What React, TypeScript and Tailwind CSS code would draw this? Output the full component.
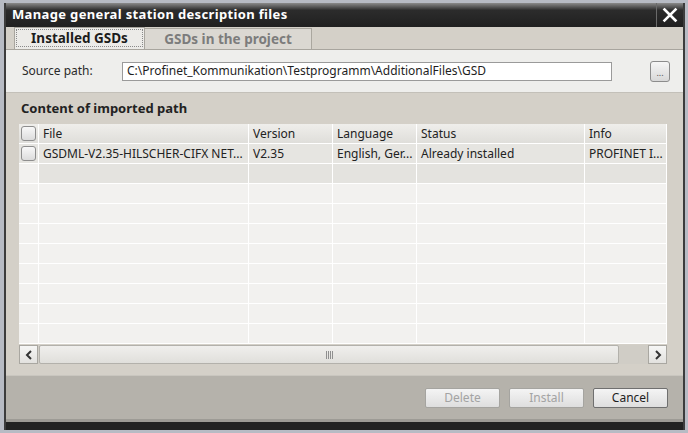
import React from 'react';

const font = { fontFamily: '"Noto Sans", "DejaVu Sans", sans-serif' };

type Col = { key: string; label: string; width: string };

const columns: Col[] = [
  { key: 'file', label: 'File', width: 'w-[210px]' },
  { key: 'version', label: 'Version', width: 'w-[84px]' },
  { key: 'language', label: 'Language', width: 'w-[84px]' },
  { key: 'status', label: 'Status', width: 'w-[168px]' },
  { key: 'info', label: 'Info', width: 'w-[82px]' },
];

const rows: Record<string, string>[] = [
  {
    file: 'GSDML-V2.35-HILSCHER-CIFX NET...',
    version: 'V2.35',
    language: 'English, Ger...',
    status: 'Already installed',
    info: 'PROFINET I...',
  },
];

function CheckBox() {
  return (
    <div className="w-[15px] h-[15px] rounded-[3px] border border-[#8e8e8e] bg-[linear-gradient(to_bottom,#f8f8f8,#dcdcdc)]" />
  );
}

function DialogButton({ label, disabled }: { label: string; disabled?: boolean }) {
  return (
    <button
      className={`w-[75px] h-[20px] border rounded-[2px] text-[12px] leading-none bg-[linear-gradient(to_bottom,#f4f4f4,#dedede)] ${
        disabled ? 'border-[#a5a4a0] text-[#a3a3a3]' : 'border-[#6f6f6f] text-[#1e1e1e]'
      }`}
    >
      {label}
    </button>
  );
}

export default function App() {
  const emptyRows = 9;

  return (
    <div className="w-[688px] h-[433px] bg-[#b7bbc4] pt-[3px] pl-[4px] pr-[3px] pb-[3px] overflow-hidden" style={font}>
      <div className="h-full flex flex-col border-x-2 border-[#3c3c3c] bg-[#d4d0c8]">
        {/* title bar */}
        <div className="h-[24px] flex items-stretch bg-[linear-gradient(to_bottom,#8a8a8a_0%,#2c2c2c_30%,#202020_100%)]">
          <div className="flex-1 pl-[6px] flex items-center text-white font-bold text-[13px] tracking-[0.35px]">
            Manage general station description files
          </div>
          <div className="w-[27px] border-l border-[#6a6a6a] flex items-center justify-center">
            <svg width="16" height="16" viewBox="0 0 16 16">
              <path d="M2.5 2.5 L13.5 13.5 M13.5 2.5 L2.5 13.5" stroke="#ffffff" strokeWidth="2.6" strokeLinecap="square" />
            </svg>
          </div>
        </div>

        {/* tabs */}
        <div className="h-[23px] flex items-end pl-[8px] bg-[#d4d0c8] border-b border-[#a8a59e]">
          <div className="w-[131px] h-[22px] flex items-center justify-center bg-[#ecebe8] border border-[#a8a59e] border-b-0 outline-1 outline-dotted outline-[#8a8a8a] -outline-offset-3 text-[13.5px] font-bold text-[#1c1c1c]">
            Installed GSDs
          </div>
          <div className="w-[167px] h-[21px] flex items-center justify-center bg-[#dbd8d2] border border-[#aaa79f] border-b-0 border-l-0 text-[13.5px] font-bold text-[#7c7c7c]">
            GSDs in the project
          </div>
        </div>

        {/* source path */}
        <div className="h-[43px] bg-[#eeeeec] flex items-center pl-[16px] pr-[13px] border-b border-[#c3c0b9]">
          <span className="w-[100px] text-[12px] text-[#2a2a2a]">Source path:</span>
          <div className="w-[490px] h-[19px] bg-white border border-[#9a9a9a] flex items-center pl-[4px] text-[12px] text-[#1e1e1e] whitespace-nowrap overflow-hidden">
            C:\Profinet_Kommunikation\Testprogramm\AdditionalFiles\GSD
          </div>
          <div className="flex-1" />
          <button className="w-[20px] h-[21px] rounded-[3px] border border-[#8c8c8c] bg-[linear-gradient(to_bottom,#f6f6f6,#d8d8d8)] flex items-end justify-center pb-[4px]">
            <span className="text-[9px] leading-none text-[#555]">...</span>
          </button>
        </div>

        {/* content section */}
        <div className="h-[282px] bg-[#d4d0c8] px-[13px] flex flex-col">
          <div className="h-[31px] flex items-center pl-[2px] text-[13px] font-bold text-[#222]">Content of imported path</div>

          <div className="w-[648px] flex flex-col">
            {/* header */}
            <div className="flex h-[20px] bg-[linear-gradient(to_bottom,#efeeeb,#dfdeda)] border-b border-white">
              <div className="w-[20px] flex items-center justify-center border-r border-white">
                <CheckBox />
              </div>
              {columns.map((c) => (
                <div key={c.key} className={`${c.width} flex items-center pl-[4px] border-r border-white text-[12px] text-[#222]`}>
                  {c.label}
                </div>
              ))}
            </div>

            {/* data rows */}
            {rows.map((r, i) => (
              <div key={i} className="flex h-[20px] bg-[#e6e5e1] border-b border-white">
                <div className="w-[20px] flex items-center justify-center border-r border-white">
                  <CheckBox />
                </div>
                {columns.map((c) => (
                  <div
                    key={c.key}
                    className={`${c.width} flex items-center pl-[4px] border-r border-white text-[12px] text-[#222] whitespace-nowrap overflow-hidden`}
                  >
                    {r[c.key]}
                  </div>
                ))}
              </div>
            ))}

            {Array.from({ length: emptyRows }).map((_, i) => (
              <div key={i} className="flex h-[20px] border-b border-white">
                <div className="w-[20px] bg-[#f2f1ef] border-r border-white" />
                {columns.map((c) => (
                  <div key={c.key} className={`${c.width} border-r border-white ${i === 0 ? 'bg-[#e4e3df]' : 'bg-[#f2f1ef]'}`} />
                ))}
              </div>
            ))}

            {/* horizontal scrollbar */}
            <div className="flex h-[19px] mt-[1px] bg-[#d0cdc6]">
              <div className="w-[19px] h-[19px] border border-[#a9a7a1] bg-[linear-gradient(to_bottom,#f6f6f5,#e2e1de)] flex items-center justify-center">
                <svg width="8" height="10" viewBox="0 0 8 10">
                  <path d="M6 1 L2 5 L6 9" stroke="#333" strokeWidth="2" fill="none" />
                </svg>
              </div>
              <div className="w-[580px] ml-[1px] h-[19px] rounded-[2px] border border-[#b3b1ab] bg-[linear-gradient(to_bottom,#f0efed,#e0dfdb)] flex items-center justify-center">
                <div className="flex gap-[1px]">
                  <div className="w-[1px] h-[8px] bg-[#8f8f8f]" />
                  <div className="w-[1px] h-[8px] bg-[#8f8f8f]" />
                  <div className="w-[1px] h-[8px] bg-[#8f8f8f]" />
                  <div className="w-[1px] h-[8px] bg-[#8f8f8f]" />
                </div>
              </div>
              <div className="flex-1" />
              <div className="w-[19px] h-[19px] border border-[#a9a7a1] bg-[linear-gradient(to_bottom,#f6f6f5,#e2e1de)] flex items-center justify-center">
                <svg width="8" height="10" viewBox="0 0 8 10">
                  <path d="M2 1 L6 5 L2 9" stroke="#333" strokeWidth="2" fill="none" />
                </svg>
              </div>
            </div>
          </div>
        </div>

        {/* footer */}
        <div className="h-[44px] bg-[#b5b2ab] border-t border-[#c9c6bf] flex items-center justify-end gap-[9px] pr-[15px] pt-[1px]">
          <DialogButton label="Delete" disabled />
          <DialogButton label="Install" disabled />
          <DialogButton label="Cancel" />
        </div>

        {/* bottom frame */}
        <div className="h-[3px] bg-[#9d9b95]" />
        <div className="flex-1 bg-[#222222]" />
      </div>
    </div>
  );
}
